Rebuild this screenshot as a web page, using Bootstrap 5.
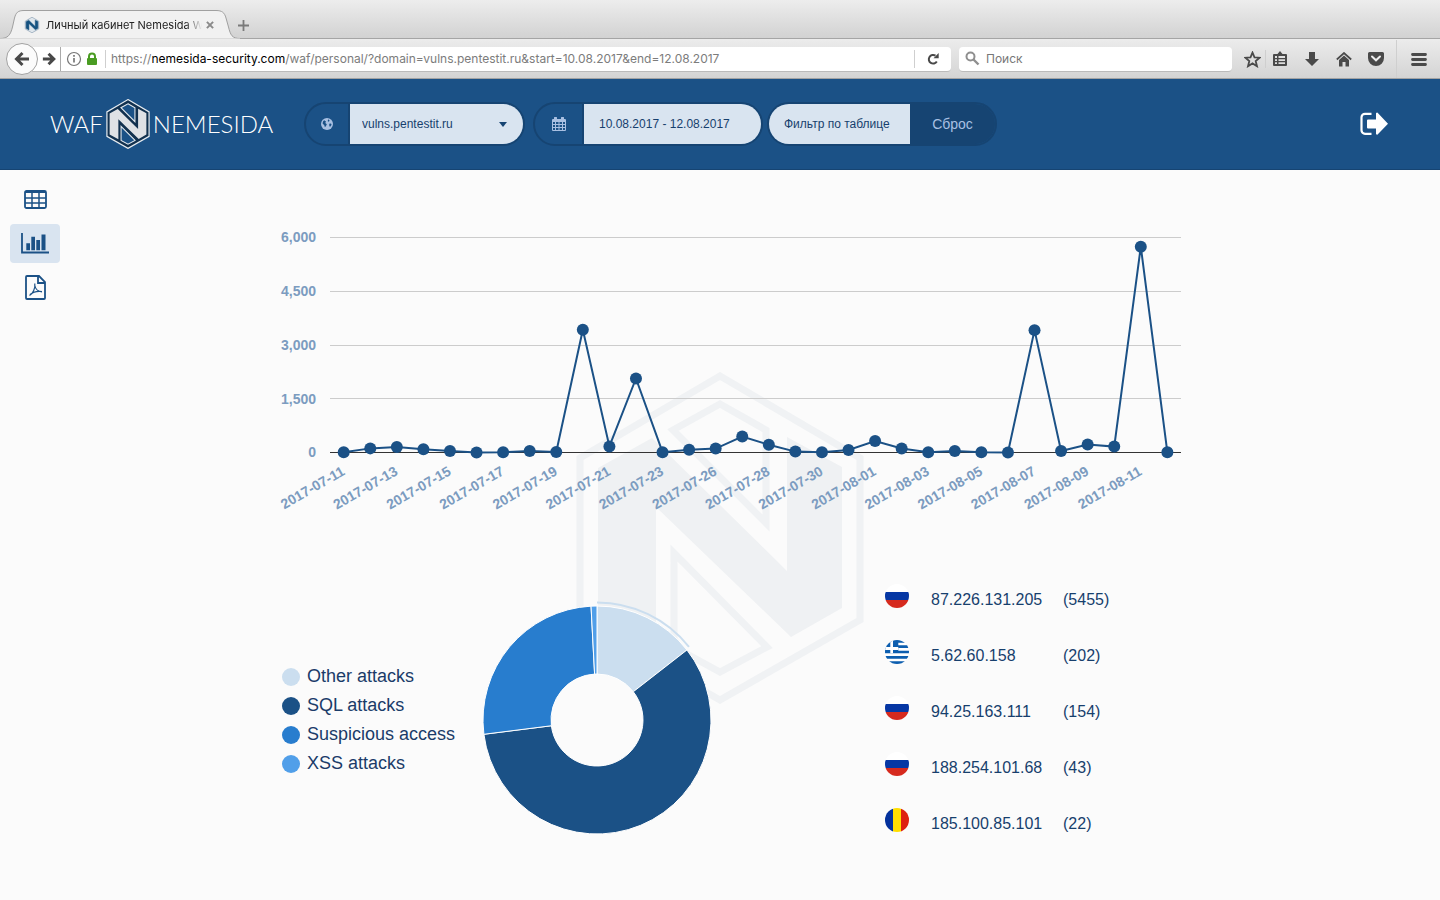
<!DOCTYPE html>
<html lang="ru">
<head>
<meta charset="utf-8">
<meta name="viewport" content="width=device-width, initial-scale=1">
<title>Личный кабинет Nemesida WAF</title>
<link rel="stylesheet" href="https://cdn.jsdelivr.net/npm/bootstrap@5.3.0/dist/css/bootstrap.min.css">
<style>
  :root { --navy: #1b5186; --navy-dark: #164472; --pale: #d9e4f0; --muted: #7c9cc0; --ink: #173f6d; }
  body { font-family: "Liberation Sans", Arial, sans-serif; background: #fbfbfb; color: var(--ink); min-height: 100vh; }
  svg { display: block; flex: none; }
  button { padding: 0; border: 0; background: none; }

  /* browser window */
  .win { font-family: Inter, "Liberation Sans", sans-serif; color: #4a4a4a; }
  .tabstrip { height: 39px; background: linear-gradient(#ededed, #d2d2d2); border-bottom: 1px solid #a5a5a5; }
  .wintab { width: 238px; height: 39px; padding: 10px 0 0 24px; position: relative; margin-bottom: -1px; }
  .wintab .shape { position: absolute; left: 0; top: 0; }
  .wintab > :not(.shape) { position: relative; }
  .tabtitle { width: 156px; margin-left: 6px; font-size: 11px; line-height: 28px; color: #222; white-space: nowrap;
    -webkit-mask-image: linear-gradient(90deg, #000 140px, transparent 156px); mask-image: linear-gradient(90deg, #000 140px, transparent 156px); }
  .toolbar { height: 40px; padding: 1px 11px 0 6px; background: linear-gradient(#ececec, #d4d4d4); border-bottom: 1px solid #a3a3a3; }
  .backbtn { width: 32px; height: 32px; border-radius: 50%; border: 1px solid #a2a2a2; background: #fbfbfb; z-index: 1; }
  .field { height: 25px; background: #fff; border-radius: 4px; border-bottom: 1px solid #bbb; }
  .urlfield { margin-left: -6px; padding-left: 6px; border-radius: 0 4px 4px 0; }
  .fwdbtn { width: 22px; height: 24px; }
  .padlock { margin: 0 7px 0 3px; }
  .vline { width: 1px; height: 18px; background: #cfcfcf; flex: none; }
  .vline-tall { height: 24px; background: #aaa; }
  .urltext { margin-left: 5px; font-size: 12px; color: #7c7c7c; white-space: nowrap; }
  .urltext b { font-weight: 400; color: #000; }
  .searchfield { width: 273px; padding-left: 6px; margin-right: 10px; }
  .searchfield input { border: 0; outline: 0; background: none; font-size: 12px; min-width: 0; }
  .searchfield input::placeholder { color: #777; opacity: 1; }
  .tool { width: 20px; height: 20px; display: flex; align-items: center; justify-content: center; color: #4a4a4a; }
  .tool + .tool { margin-left: 12px; }
  .afterstar { margin: 0 4px 0 3px; }
  .beforemenu { margin: 0 12px 0 10px; }

  /* application header */
  .appbar { background: var(--navy); border-bottom: 1px solid var(--navy-dark); padding: 20px 52px 20px 50px; }
  .brand { width: 254px; gap: 3px; color: #fff; text-decoration: none; font: 300 24px/44px Lato, sans-serif; }
  .brand:hover { color: #fff; }
  .pill { height: 44px; border: 2px solid var(--navy-dark); border-radius: 22px; overflow: hidden; }
  .pill label { width: 44px; color: #a9c0e2; border-right: 2px solid var(--navy-dark); display: flex; align-items: center; justify-content: center; }
  .pill .wide { width: 49px; }
  .pill input, .pill select { height: 40px; border: 0; border-radius: 0; background-color: var(--pale); color: var(--ink); font-size: 12px; outline: 0; }
  .pill select { width: 173px; padding: 0 40px 0 12px; background-size: 8px 5px; background-position: right 16px center;
    background-image: url("data:image/svg+xml,%3Csvg xmlns='http://www.w3.org/2000/svg' viewBox='0 0 8 5'%3E%3Cpath fill='%23164472' d='M0 0h8L4 5z'/%3E%3C/svg%3E"); }
  .pill .dates { width: 177px; padding: 0 15px; }
  .pill .filter { width: 141px; padding: 0 0 0 15px; }
  .pill input::placeholder { color: var(--ink); opacity: 1; }
  .reset { width: 85px; background: var(--navy-dark); color: #a9c0e2; font-size: 14px; }

  /* page */
  .page { display: grid; grid-template-columns: 70px minmax(0, 1fr) 70px; position: relative; }
  .side { padding: 10px; display: flex; flex-direction: column; gap: 5px; }
  .side a { height: 39px; border-radius: 4px; color: var(--navy); display: flex; align-items: center; justify-content: center; }
  .side a.active { background: var(--pale); }
  .report { width: 100%; max-width: 922px; margin: 0 auto; padding-top: 50px; }
  .watermark { position: absolute; left: 0; right: 0; top: 202px; margin: 0 auto; z-index: -1; }
  .linechart { width: 100%; height: auto; overflow: visible; }
  .linechart text { font-size: 14px; font-weight: 700; fill: var(--muted); text-anchor: end; }
  .lower { padding: 51px 0 48px 23px; }
  .legend { width: 195px; margin-top: 18px; font-size: 18px; line-height: 29px; white-space: nowrap; color: #1a3b69; }
  .dot { width: 18px; height: 18px; margin-right: 7px; border-radius: 50%; flex: none; }
  .donut { margin-top: 18px; }
  .ips { width: 240px; margin-right: 56px; font-size: 16px; line-height: 24px; }
  .ips td { height: 56px; padding: 2px 0 0; vertical-align: middle; }
  .ips .flagcell { width: 46px; padding-bottom: 8px; }
  .ips .ipcell { width: 132px; }
</style>
</head>
<body>

<svg width="0" height="0" class="position-absolute" aria-hidden="true">
  <defs>
    <path id="hex" d="M144 4 284 86V248L144 328 4 248V86z"/>
    <path id="letter" d="M76 66 211 199V65L266 95V236L215 265 80 135V268L22 235V96z"/>
    <path id="wedges" d="M144 32 190 58V151L97 58zM98 181 191 275 144 300 98 275z"/>
    <clipPath id="round"><circle cx="12" cy="12" r="12"/></clipPath>
    <symbol id="flag-ru" viewBox="0 0 24 24"><g clip-path="url(#round)"><path fill="#fff" d="M0 0h24v8H0z"/><path fill="#0637a4" d="M0 8h24v8H0z"/><path fill="#d62a1e" d="M0 16h24v8H0z"/></g></symbol>
    <symbol id="flag-ro" viewBox="0 0 24 24"><g clip-path="url(#round)"><path fill="#03319c" d="M0 0h8v24H0z"/><path fill="#ffde00" d="M8 0h8v24H8z"/><path fill="#de2110" d="M16 0h8v24h-8z"/></g></symbol>
    <symbol id="flag-gr" viewBox="0 0 24 24"><g clip-path="url(#round)"><path fill="#fff" d="M0 0h24v24H0z"/><path fill="#0d5eaf" d="M0 0h24v2.700H0zM0 5.300h24V8H0zM0 10.700h24v2.600H0zM0 16h24v2.700H0zM0 21.300h24V24H0zM0 0h13.300v13.300H0z"/><path fill="#fff" d="M5.300 0H8v13.300H5.300zM0 7h13.300v3H0z"/></g></symbol>
  </defs>
</svg>

<div class="win">
  <div class="tabstrip d-flex">
    <div class="wintab d-flex align-items-center">
      <svg class="shape" width="240" height="39" viewBox="0 0 240 39"><path d="M0 38.500C8 38.500 10.500 35 12.500 27L14.500 18C16 12.500 18 10.500 24 10.500H216C222 10.500 224.500 12.500 226 18L228.500 27C230.500 35 232 38.500 240 38.500" fill="#f1f1f1" stroke="#a0a0a0"/><path d="M0 39H240" stroke="#ececec"/></svg>
      <svg width="16" height="16" viewBox="0 0 288 332"><use href="#hex" fill="#dfe6ec" stroke="#8aa0b3" stroke-width="14"/><use href="#letter" fill="#14517f" stroke="#14517f" stroke-width="10"/></svg>
      <div class="tabtitle">Личный кабинет Nemesida W</div>
      <button type="button" class="ms-1" aria-label="Закрыть вкладку"><svg width="8" height="8" viewBox="0 0 9 9"><path d="M1 1 8 8M8 1 1 8" stroke="#8a8a8a" stroke-width="2.200"/></svg></button>
    </div>
    <button type="button" class="pt-2 mt-1" aria-label="Новая вкладка"><svg width="11" height="11" viewBox="0 0 11 11"><path d="M5.500 0V11M0 5.500H11" stroke="#7a7a7a" stroke-width="1.800"/></svg></button>
  </div>

  <div class="toolbar d-flex align-items-center">
    <button type="button" class="backbtn d-flex align-items-center justify-content-center" aria-label="Назад"><svg width="16" height="16" viewBox="0 0 16 16"><path d="M8.500 2 2.500 8l6 6M3 8H15" fill="none" stroke="#484848" stroke-width="3"/></svg></button>
    <div class="field urlfield flex-fill d-flex align-items-center me-2 pe-2">
      <button type="button" class="fwdbtn d-flex align-items-center justify-content-center" aria-label="Вперёд"><svg width="14" height="14" viewBox="0 0 16 16"><path d="M7.500 2l6 6-6 6M13 8H1" fill="none" stroke="#484848" stroke-width="3.400"/></svg></button>
      <span class="vline vline-tall me-1"></span>
      <svg width="18" height="16" viewBox="0 0 18 16"><circle cx="9" cy="8" r="6.500" fill="none" stroke="#777" stroke-width="1.200"/><path d="M9 7v4.500M9 4v1.700" stroke="#666" stroke-width="1.500"/></svg>
      <svg class="padlock" width="12" height="14" viewBox="0 0 12 14"><path d="M3 7V4.500a3 3 0 0 1 6 0V7" fill="none" stroke="#4a9c22" stroke-width="2"/><rect x="1" y="6" width="10" height="7" rx="1" fill="#4a9c22"/></svg>
      <span class="vline"></span>
      <div class="urltext flex-fill">https://<b>nemesida-security.com</b>/waf/personal/?domain=vulns.pentestit.ru&amp;start=10.08.2017&amp;end=12.08.2017</div>
      <span class="vline me-2"></span>
      <button type="button" class="px-1" aria-label="Обновить"><svg width="12" height="12" viewBox="0 0 12 12"><path d="M9.800 8.500A4.300 4.300 0 1 1 8.500 2.700" fill="none" stroke="#484848" stroke-width="2"/><path d="M6.500 5.200H11.700V0z" fill="#484848"/></svg></button>
    </div>
    <div class="field searchfield d-flex align-items-center gap-1">
      <svg width="15" height="15" viewBox="0 0 15 15"><circle cx="5.500" cy="5.500" r="4" fill="none" stroke="#8f8f8f" stroke-width="2"/><path d="M8.500 8.500 13.500 13.500" stroke="#8f8f8f" stroke-width="2.400"/></svg>
      <input type="search" placeholder="Поиск" aria-label="Поиск">
    </div>
    <button type="button" class="tool" aria-label="Закладка"><svg width="17" height="17" viewBox="0 0 16 16"><path d="M8 1.500 9.900 6 14.700 6.300 11 9.500 12.200 14.300 8 11.700 3.800 14.300 5 9.500 1.300 6.300 6.100 6z" fill="none" stroke="currentColor" stroke-width="1.700"/></svg></button>
    <span class="vline afterstar"></span>
    <button type="button" class="tool" aria-label="Список закладок"><svg width="14" height="16" viewBox="0 0 14 16"><path fill="currentColor" fill-rule="evenodd" d="M1 3H4.500L7 0 9.500 3H13a1 1 0 0 1 1 1V14a1 1 0 0 1-1 1H1a1 1 0 0 1-1-1V4a1 1 0 0 1 1-1zM2 5V7H4V5zM5.500 5V7H12V5zM2 8.300v1.700H4V8.300zM5.500 8.300v1.700H12V8.300zM2 11.300v1.700H4v-1.700zM5.500 11.300v1.700H12v-1.700z"/></svg></button>
    <button type="button" class="tool" aria-label="Загрузки"><svg width="14" height="14" viewBox="0 0 14 14"><path fill="currentColor" d="M4 0h6v7h4l-7 7-7-7h4z"/></svg></button>
    <button type="button" class="tool" aria-label="Домой"><svg width="16" height="15" viewBox="0 0 16 15"><path d="M.800 7.500 8 1l7.200 6.500" fill="none" stroke="currentColor" stroke-width="1.700"/><path fill="currentColor" d="M8 3.500 13 8v6.500H9.500V10h-3v4.500H3V8z"/></svg></button>
    <button type="button" class="tool" aria-label="Pocket"><svg width="16" height="14" viewBox="0 0 16 14"><path fill="currentColor" d="M1.500 0h13A1.500 1.500 0 0 1 16 1.500V6a8 8 0 0 1-16 0V1.500A1.500 1.500 0 0 1 1.500 0z"/><path d="M4 4.500 8 8.300 12 4.500" fill="none" stroke="#eee" stroke-width="2" stroke-linecap="round"/></svg></button>
    <span class="vline h-100 beforemenu"></span>
    <button type="button" class="tool" aria-label="Меню"><svg width="16" height="13" viewBox="0 0 16 13"><path d="M1.500 1.500h13M1.500 6.500h13M1.500 11.500h13" stroke="currentColor" stroke-width="2.800" stroke-linecap="round"/></svg></button>
  </div>
</div>

<header class="appbar d-flex align-items-center">
  <a href="#" class="brand d-flex align-items-center">
    <span>WAF</span>
    <svg width="44" height="50" viewBox="0 0 288 332"><use href="#hex" fill="#12314f" stroke="#e6ebf0" stroke-width="8"/><use href="#letter" fill="#dfe1e5"/><use href="#wedges" fill="#1b5186" stroke="#e6ebf0" stroke-width="7"/></svg>
    <span>NEMESIDA</span>
  </a>
  <form class="d-flex align-items-center" onsubmit="return false">
    <div class="pill d-flex me-2">
      <label for="site" title="Домен"><svg width="12" height="12" viewBox="0 0 12 12"><circle cx="6" cy="6" r="6" fill="currentColor"/><path fill="#1b5186" d="M2 3.400 3.200 2.300 5 3.400 4.300 5 5.800 6.200 5 8 3.900 9.300 3.300 7.300 1.600 5.500zM7 1.300l1.500.900L8 3.800 6.800 3.300zM8.200 5.800l1.800-.300.600 1.300L9 9 8.300 7.800z"/></svg></label>
      <select id="site" class="form-select"><option>vulns.pentestit.ru</option></select>
    </div>
    <div class="pill d-flex me-1">
      <label for="range" class="wide" title="Период"><svg width="14" height="14" viewBox="0 0 14 14"><path fill="currentColor" fill-rule="evenodd" d="M1 2H2V1a1 1 0 0 1 3 0v1h4V1a1 1 0 0 1 3 0v1h1a1 1 0 0 1 1 1V13a1 1 0 0 1-1 1H1a1 1 0 0 1-1-1V3a1 1 0 0 1 1-1zM1 5v2h2V5zM4 5v2h2.500V5zM7.500 5v2H10V5zM11 5v2h2V5zM1 8v2h2V8zM4 8v2h2.500V8zM7.500 8v2H10V8zM11 8v2h2V8zM1 11v2h2v-2zM4 11v2h2.500v-2zM7.500 11v2H10v-2zM11 11v2h2v-2z"/></svg></label>
      <input id="range" class="dates" type="text" value="10.08.2017 - 12.08.2017">
    </div>
    <div class="pill d-flex">
      <input class="filter" type="text" placeholder="Фильтр по таблице" aria-label="Фильтр по таблице">
      <button type="reset" class="reset">Сброс</button>
    </div>
  </form>
  <a href="#" class="ms-auto" aria-label="Выход"><svg width="28" height="24" viewBox="0 0 28 24"><path d="M11.500 1.800H5A3.500 3.500 0 0 0 1.500 5.300v13A3.500 3.500 0 0 0 5 21.800h6.500" fill="none" stroke="#fff" stroke-width="2.200"/><path fill="#fff" d="M8 7.500h8V1.500a1 1 0 0 1 1.600-.700L28 11.700 17.600 22.500A1 1 0 0 1 16 21.800V16.500H8a1 1 0 0 1-1-1v-7a1 1 0 0 1 1-1z"/></svg></a>
</header>

<main class="page">
  <svg class="watermark" width="288" height="332" viewBox="0 0 288 332" aria-hidden="true">
    <use href="#hex" fill="none" stroke="#f0f2f4" stroke-width="7"/><use href="#letter" fill="#eff1f3"/><use href="#wedges" fill="none" stroke="#f0f2f4" stroke-width="7"/>
  </svg>

  <nav class="side" aria-label="Разделы">
    <a href="#" aria-label="Таблица"><svg width="23" height="19" viewBox="0 0 23 19"><rect x="1" y="1" width="21" height="17" rx="1.500" fill="none" stroke="currentColor" stroke-width="1.800"/><path d="M1 2.200h21M1 8h21M1 13h21M8 2v16M15 2v16" stroke="currentColor" stroke-width="1.500"/></svg></a>
    <a href="#" class="active" aria-label="Графики"><svg width="28" height="22" viewBox="0 0 28 22"><path d="M1 0v19.500h27" fill="none" stroke="currentColor" stroke-width="1.800"/><path fill="currentColor" d="M5.300 10.300H9v7H5.300zM10.300 3.700H14v13.600h-3.700zM15.300 7H19v10.300h-3.700zM20.500 1.500h4v15.800h-4z"/></svg></a>
    <a href="#" aria-label="PDF"><svg width="21" height="25" viewBox="0 0 21 25"><path d="M1 2A1 1 0 0 1 2 1H14L20 7V23a1 1 0 0 1-1 1H2a1 1 0 0 1-1-1zM13 1V8H20" fill="none" stroke="currentColor" stroke-width="1.800"/><path d="M4.500 20.500C8 18.500 10.500 13 9.800 8.500M9.800 10.500C10.500 14 13 16.500 17 17M5 19.500C8 17 12 15.800 17 16.500" fill="none" stroke="currentColor" stroke-width="1.200"/></svg></a>
  </nav>

  <div class="report">
    <svg id="line" class="linechart" viewBox="0 0 922 300" role="img" aria-label="Атаки по дням">
      <g stroke="#ccc"><path d="M71 17.500H922M71 71.500H922M71 125.500H922M71 178.500H922"/><path stroke="#333" d="M71 232.500H922"/></g>
      <g><text x="57" y="22">6,000</text><text x="57" y="76">4,500</text><text x="57" y="130">3,000</text><text x="57" y="184">1,500</text><text x="57" y="237">0</text></g>
    </svg>

    <div class="lower d-flex align-items-center">
      <div class="legend">
        <div class="d-flex align-items-center"><span class="dot" style="background:#cbdeef"></span>Other attacks</div>
        <div class="d-flex align-items-center"><span class="dot" style="background:#1b5186"></span>SQL attacks</div>
        <div class="d-flex align-items-center"><span class="dot" style="background:#287dce"></span>Suspicious access</div>
        <div class="d-flex align-items-center"><span class="dot" style="background:#519fe9"></span>XSS attacks</div>
      </div>
      <svg id="donut" class="donut" width="240" height="240" viewBox="-120 -120 240 240" role="img" aria-label="Типы атак"></svg>
      <table class="ips ms-auto">
        <tbody>
          <tr><td class="flagcell"><svg width="24" height="24"><use href="#flag-ru"/></svg></td><td class="ipcell">87.226.131.205</td><td>(5455)</td></tr>
          <tr><td class="flagcell"><svg width="24" height="24"><use href="#flag-gr"/></svg></td><td class="ipcell">5.62.60.158</td><td>(202)</td></tr>
          <tr><td class="flagcell"><svg width="24" height="24"><use href="#flag-ru"/></svg></td><td class="ipcell">94.25.163.111</td><td>(154)</td></tr>
          <tr><td class="flagcell"><svg width="24" height="24"><use href="#flag-ru"/></svg></td><td class="ipcell">188.254.101.68</td><td>(43)</td></tr>
          <tr><td class="flagcell"><svg width="24" height="24"><use href="#flag-ro"/></svg></td><td class="ipcell">185.100.85.101</td><td>(22)</td></tr>
        </tbody>
      </table>
    </div>
  </div>
</main>

<script>
  const NS = 'http://www.w3.org/2000/svg';
  function add(parent, tag, attrs, text) {
    const el = document.createElementNS(NS, tag);
    for (const k in attrs) el.setAttribute(k, attrs[k]);
    if (text) el.textContent = text;
    parent.appendChild(el);
  }

  // attacks per day; every second day carries a label
  const attacks = [5, 115, 155, 90, 40, 0, 5, 40, 15, 3425, 170, 2065, 10, 75, 110, 445, 215, 25, 8, 70, 320, 110, 5, 40, 5, 0, 3415, 40, 220, 165, 5745, 5];
  const days = ['07-11', '07-13', '07-15', '07-17', '07-19', '07-21', '07-23', '07-26', '07-28', '07-30', '08-01', '08-03', '08-05', '08-07', '08-09', '08-11'];
  const line = document.getElementById('line');
  const px = i => 84.700 + i * 26.570, py = v => 232.500 - v * 215 / 6000;
  add(line, 'polyline', { points: attacks.map((v, i) => px(i) + ',' + py(v)).join(' '), fill: 'none', stroke: '#1b5186', 'stroke-width': 2 });
  attacks.forEach((v, i) => add(line, 'circle', { cx: px(i), cy: py(v), r: 6, fill: '#1b5186' }));
  days.forEach((d, i) => add(line, 'text', { transform: `translate(${px(i * 2) + 2} 254) rotate(-30)` }, '2017-' + d));

  // donut slices, degrees clockwise from the top
  const donut = document.getElementById('donut');
  const at = (deg, r) => { const a = deg * Math.PI / 180; return (r * Math.sin(a)) + ' ' + (-r * Math.cos(a)); };
  [[0, 52.100, '#cbdeef'], [52.100, 262.800, '#1b5186'], [262.800, 357, '#287dce'], [357, 360, '#519fe9']].forEach(([a, b, color]) => {
    const big = b - a > 180 ? 1 : 0;
    add(donut, 'path', { fill: color, stroke: '#fff', d: `M${at(a, 114)}A114 114 0 ${big} 1 ${at(b, 114)}L${at(b, 46)}A46 46 0 ${big} 0 ${at(a, 46)}z` });
  });
  add(donut, 'path', { fill: 'none', stroke: '#cbdeef', 'stroke-width': 2, d: `M${at(0, 117.500)}A117.500 117.500 0 0 1 ${at(51.500, 117.500)}` });
</script>
<script src="https://cdn.jsdelivr.net/npm/bootstrap@5.3.0/dist/js/bootstrap.bundle.min.js"></script>
</body>
</html>
